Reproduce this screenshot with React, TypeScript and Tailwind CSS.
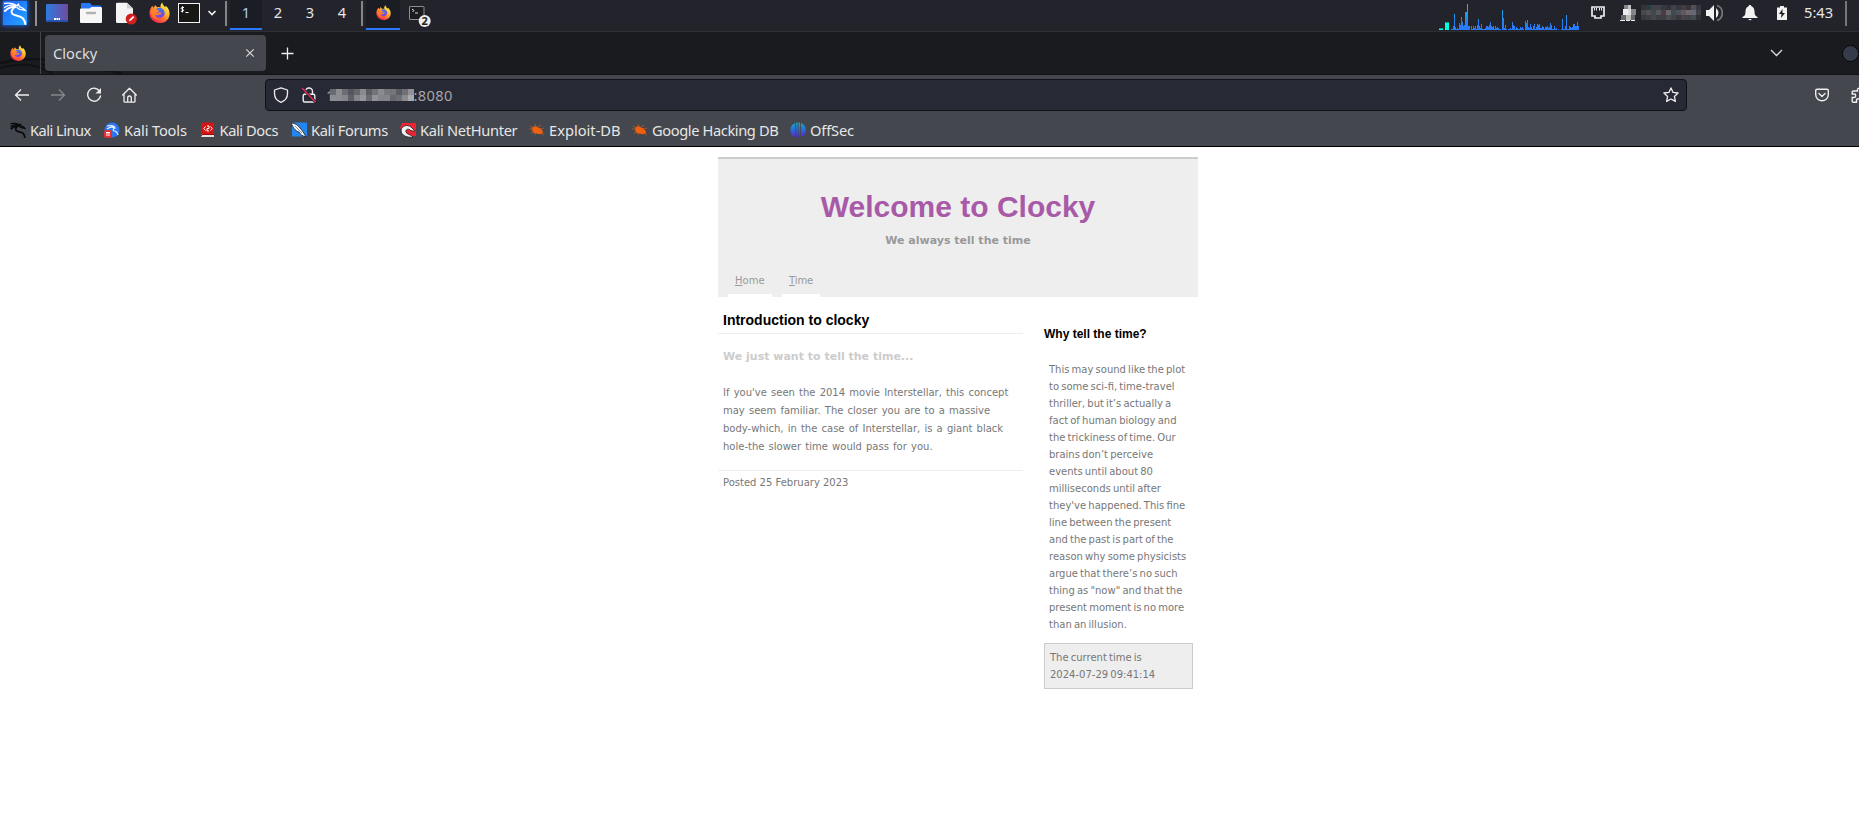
import React from "react";

const heights: [number, number][] = [
  [1451, 1], [1452, 1], [1453, 4], [1454, 16], [1455, 3], [1456, 1], [1457, 2], [1458, 1], [1459, 7], [1460, 5], [1461, 13], [1462, 8], [1463, 4], [1464, 5],
  [1465, 18], [1466, 18], [1467, 26], [1468, 4], [1469, 4], [1471, 4], [1472, 1], [1473, 4], [1474, 2], [1475, 4], [1476, 1], [1477, 5], [1478, 11], [1479, 4],
  [1480, 2], [1481, 6], [1482, 1], [1483, 1], [1484, 1], [1485, 2], [1486, 4], [1487, 4], [1488, 3], [1489, 5], [1490, 8], [1491, 4], [1492, 3], [1493, 4],
  [1494, 1], [1495, 4], [1496, 2], [1497, 3], [1498, 2], [1499, 1], [1500, 1], [1502, 20], [1503, 12], [1504, 2], [1505, 5], [1506, 1], [1508, 1], [1509, 1],
  [1510, 2], [1511, 1], [1512, 8], [1513, 5], [1514, 4], [1515, 1], [1516, 3], [1517, 2], [1518, 1], [1519, 1], [1520, 3], [1521, 2], [1522, 3], [1523, 1],
  [1525, 9], [1526, 7], [1527, 10], [1528, 3], [1529, 2], [1530, 6], [1531, 3], [1532, 1], [1533, 4], [1534, 6], [1535, 1], [1536, 3], [1537, 6], [1538, 5],
  [1539, 6], [1540, 2], [1541, 2], [1542, 4], [1543, 3], [1544, 1], [1545, 3], [1546, 3], [1547, 4], [1548, 2], [1549, 3], [1550, 7], [1551, 5], [1552, 1],
  [1553, 1], [1554, 4], [1555, 1], [1556, 2], [1558, 1], [1561, 1], [1562, 11], [1563, 1], [1564, 1], [1565, 4], [1566, 15], [1567, 1], [1568, 1], [1569, 4],
  [1570, 3], [1571, 2], [1572, 3], [1573, 6], [1574, 6], [1575, 4], [1576, 4], [1577, 8], [1578, 4],
];

function Graph() {
  return (
    <svg width="142" height="30" viewBox="1438 0 142 30" shapeRendering="crispEdges">
      <defs>
        <linearGradient id="load" gradientUnits="userSpaceOnUse" x1="0" y1="0" x2="0" y2="30">
          <stop offset="0" stopColor="#17c9dd" />
          <stop offset="0.75" stopColor="#2680f2" />
          <stop offset="1" stopColor="#2a79ff" />
        </linearGradient>
      </defs>
      <path d="M1439 28h4v2h-4zM1445 22h4v8h-4z" fill="#00ffe0" />
      <path d="M1439 28h4v1h-4zM1445 22h4v1h-4z" fill="#0a9d90" />
      {heights.map(([x, h]) => (
        <rect key={x} x={x} y={30 - h} width="1" height={h} fill="url(#load)" />
      ))}
    </svg>
  );
}

function Dragon({ size, color, weight }: { size: number; color: string; weight: number }) {
  return (
    <svg width={size} height={size} viewBox="0 0 24 24" fill="none" stroke={color} strokeLinecap="round" className="shrink-0">
      <path d="M1.500 2.500C6 1.800 10 2.300 13.500 4.300" strokeWidth={weight} />
      <path d="M1.500 6.500C5 4 10 3.500 14 4.800l1.500-1.600.8 2.500 4.200 1.800 1.800 2-3.800-.8c-2.500.2-3-.4-4.500-2.200" strokeWidth={weight} />
      <path d="M2 10c2.500-3 6-4.500 11-4.300-4 1.800-5.500 4.800-3.500 7.300 3 2.500 7.500.8 10.500 4.500 1.400 1.800 2 3.500 2.300 5.500" strokeWidth={weight + 0.7} />
    </svg>
  );
}

function Firefox({ size, id }: { size: number; id: string }) {
  return (
    <svg width={size} height={size} viewBox="0 0 24 24" className="shrink-0">
      <defs>
        <linearGradient id={id + "a"} x1="0.85" y1="0.1" x2="0.2" y2="0.9">
          <stop offset="0" stopColor="#fff44f" />
          <stop offset="0.35" stopColor="#ffb62c" />
          <stop offset="0.65" stopColor="#ff6a36" />
          <stop offset="1" stopColor="#f5254f" />
        </linearGradient>
        <linearGradient id={id + "b"} x1="0.3" y1="0" x2="0.5" y2="1">
          <stop offset="0" stopColor="#3f7ae8" />
          <stop offset="1" stopColor="#8141e0" />
        </linearGradient>
      </defs>
      <path d="M15.2.5c.2 2.500 1.800 3.700 3 5.200l1.300-1.100c2.700 2.500 4.100 5.500 4 9C23.300 19.800 18.500 24 12.300 24 5.800 24 .5 19.300.5 12.900c0-3.500 1.500-6.700 3.400-8.700L5 6.600l2.300-3.300c.4 1.300 1.300 2 2.300 2.600 1.500-.2 2.700 0 3.700.4-.6-2.200.3-4.300 1.900-5.800z" fill={`url(#${id}a)`} />
      <path d="M8.200 8.300c1.300-1.500 3.600-1.900 5.300-1.400 2.700 1 4.600 3.200 4.500 6-.1 3.100-2.600 5.200-5.700 5.200-3 0-5.100-1.900-5.600-4.300 1.100 1.500 3.200 1.900 5.200.6 1-.7 1.900-.6 2.100-1.100.1-.7-.9-1.300-2-1.300-1.400 0-1.900.8-3.200.8.600-1.400 1.700-2 2.900-2.600-.900-.5-2.200-.9-3.500-1.900z" fill={`url(#${id}b)`} />
      <path d="M1.800 10.500c.4-1.700 1.800-2.700 3.300-3 1.700-.2 3.300.1 4.900 2.100-1.500.4-2.400 1.500-2.500 2.900.9.900 2.500 1.100 3.900.5-.9 1.900-3.300 2.400-4.800 1.500.4 2.900 3 4.900 6 4.800-5.500 2.200-10.700-2.100-10.800-8.800z" fill="#ff8a25" fillOpacity=".75" />
    </svg>
  );
}

function Mosaic({ colors, cols, cell, rows }: { colors: string[]; cols: number; cell: number; rows: number }) {
  return (
    <svg width={cols * cell} height={rows * cell} shapeRendering="crispEdges" className="shrink-0">
      {colors.map((c, i) => (
        <rect key={i} x={(i % cols) * cell} y={Math.floor(i / cols) * cell} width={cell} height={cell} fill={c} />
      ))}
    </svg>
  );
}

function Panel() {
  return (
    <header className="flex h-[31px] shrink-0 items-start bg-[#22232b] text-[14.67px] text-[#e6e6e6]">
      <div className="mt-px ml-[3px] flex h-6 w-6 shrink-0 items-center justify-center bg-linear-to-br from-[#2560ff] to-[#27a4ff] shadow-[0_0_4px_1px_#1d5fd0]">
        <Dragon size={24} color="#fff" weight={1.3} />
      </div>
      <div className="mt-px ml-2 h-[25px] w-[2px] bg-[#909090]" />
      <svg className="mt-1 ml-[9px]" width="22" height="18" viewBox="0 0 22 18">
        <defs><linearGradient id="desk"><stop offset="0" stopColor="#2d7be0" /><stop offset="1" stopColor="#704ba0" /></linearGradient></defs>
        <rect width="22" height="18" rx="1" fill="url(#desk)" />
        <path d="M0 17h22" stroke="#2a50b0" strokeWidth="2" />
        <path d="M8 14h2v2H8zM10.500 14h1.500v2h-1.500zM12.500 14h1.500v2h-1.500z" fill="#fff" />
      </svg>
      <svg className="mt-[3px] ml-3" width="22" height="20" viewBox="0 0 22 20">
        <path d="M1 1q0-1 1-1h8l2 2.500h8q1 0 1 1V9H1z" fill="#2777ff" />
        <path d="M0 6.500q0-1 1-1h8.500L11.500 4H21q1 0 1 1v14q0 1-1 1H1q-1 0-1-1z" fill="#f6f6f6" />
        <path d="M7 10h8" stroke="#b2b2b2" strokeWidth="2.400" strokeLinecap="round" />
      </svg>
      <svg className="mt-[2px] ml-[14px]" width="22" height="23" viewBox="0 0 22 23">
        <path d="M0 2q0-1.300 1.300-1.300H11L17 6.500V21H1.300Q0 21 0 19.700z" fill="#f4f4f4" />
        <path d="M11 .7 17 6.500h-6z" fill="#cfcfcf" />
        <circle cx="15.300" cy="17" r="5.600" fill="#d01f1f" />
        <path d="m13 19.300.7-2 3.400-3.200 1.200 1.100-3.300 3.400z" fill="#fff" />
      </svg>
      <div className="mt-[2px] ml-[11px] flex"><Firefox size={21} id="p" /></div>
      <svg className="mt-[3px] ml-2" width="22" height="20" viewBox="0 0 22 20">
        <rect x=".5" y=".5" width="21" height="19" fill="#171816" stroke="#f2f2f0" />
        <path d="M6 4.500H4.200c-1.500.1-1.300 1.700 0 1.800 1.900.1 1.900 1.900.1 2H2.800M4.500 3.200v6.300M7.500 9.500h3" fill="none" stroke="#fff" strokeWidth="1" />
      </svg>
      <svg className="mt-[9px] ml-[7px]" width="10" height="8" viewBox="0 0 10 8"><path d="m1.500 2 3.500 3.500L8.500 2" fill="none" stroke="#eee" strokeWidth="1.700" /></svg>
      <div className="mt-px ml-[8px] h-[25px] w-[2px] bg-[#858585]" />
      <nav className="ml-[3px] flex h-[30px] leading-[25px]">
        <span className="w-8 border-b-2 border-[#2777ff] bg-[#1b1d25] text-center text-[#a9ccf5]">1</span>
        <span className="w-8 text-center">2</span>
        <span className="w-8 text-center">3</span>
        <span className="w-8 text-center">4</span>
      </nav>
      <div className="mt-px ml-[3px] h-[25px] w-[2px] bg-[#858585]" />
      <div className="ml-[3px] flex h-[30px] w-[34px] justify-center border-b-2 border-[#2777ff] bg-[#1b1d25] pt-[5px]"><Firefox size={15} id="t" /></div>
      <svg className="mt-[5px] ml-[9px]" width="22" height="23" viewBox="0 0 22 23">
        <rect x=".5" y="1.500" width="14.500" height="13" rx=".5" fill="#1b1c1d" stroke="#8d8d8d" />
        <path d="m3 4 2 1.500L3.500 7M6 8h3" stroke="#ddd" fill="none" />
        <circle cx="15.700" cy="16" r="6" fill="#eee" />
        <text x="15.700" y="20" textAnchor="middle" fontSize="11" fontWeight="700" fill="#222">2</text>
      </svg>
      <div className="ml-auto flex">
        <Graph />
        <svg className="mt-[6px] ml-[10px]" width="16" height="14" viewBox="0 0 16 14">
          <path d="M2 1h12v9h-3v2H5v-2H2z" fill="none" stroke="#eee" strokeWidth="1.700" />
          <path d="M4.500 2v2.500M6.500 2v2.500M9.500 2v2.500M11.500 2v2.500" stroke="#eee" />
        </svg>
        <svg className="mt-[5px] ml-[14px]" width="16" height="16" shapeRendering="crispEdges">
          <path d="M4 0h4v4H4z" fill="#858689" /><path d="M8 0h3v4H8z" fill="#c4c4c5" />
          <path d="M3 4h5v6H3z" fill="#eee" /><path d="M8 4h3v6H8z" fill="#ddd" /><path d="M11 4h5v6h-5z" fill="#858587" />
          <path d="M1 10h5v5H1z" fill="#6a6a6d" /><path d="M6 10h5v5H6z" fill="#bbb" /><path d="M11 10h4v5h-4z" fill="#666" />
          <path d="M0 15h5v1H0zM6 15h4v1H6zM11 15h4v1h-4z" fill="#eee" />
        </svg>
        <div className="mt-[5px] ml-[5px]">
          <Mosaic cols={12} rows={3} cell={5} colors={["#333338", "#2c3a42", "#414247", "#414147", "#313b44", "#343238", "#404248", "#303840", "#463b3e", "#35343b", "#514e55", "#343941", "#48484c", "#505155", "#41484d", "#555860", "#513a43", "#66666b", "#404954", "#4c5058", "#625960", "#72686c", "#626a7a", "#414149", "#38393e", "#3b3e43", "#47474b", "#3d3f47", "#3d3d43", "#4b4b50", "#3f4247", "#38383e", "#4b4148", "#3f4348", "#444a52", "#303137"]} />
        </div>
        <svg className="mt-[4px] ml-[5px]" width="18" height="18" viewBox="0 0 18 18">
          <path d="M0 6h3l5-5v16l-5-5H0z" fill="#f2f2f0" />
          <path d="M10 4q5 5 0 10z" fill="#f2f2f0" />
          <path d="M11 1.500c7 2 7 13 0 15" fill="none" stroke="#77787b" strokeWidth="1.700" />
        </svg>
        <svg className="mt-[4px] ml-[18px]" width="16" height="17" viewBox="0 0 16 17">
          <path d="M8 1c-1 0-1.300.7-1.400 1.300C4.500 3 3.700 5 3.500 7c0 4-1 5-3 6v1h15v-1c-2-1-3-2-3-6-.2-2-1-4-3.100-4.700C9.300 1.700 9 1 8 1zM6 15h4l-2 1.500z" fill="#f2f2f0" />
        </svg>
        <svg className="mt-[6px] ml-[19px]" width="10" height="14" viewBox="0 0 10 14">
          <path d="M0 1.500h3V0h4v1.500h3V14H0z" fill="#f2f2f0" /><path d="M5.500 3 2 8h2.500L4 12l4-5H5.500z" fill="#1c1d24" />
        </svg>
        <span className="ml-[17px] w-[30px] leading-[25px]">5:43</span>
        <div className="mt-px mr-[12px] ml-[11px] h-[25px] w-[2px] bg-[#777]" />
      </div>
    </header>
  );
}

function TabStrip() {
  return (
    <div className="relative flex h-11 shrink-0 items-center border-t border-b border-t-[#2e2f33] border-b-[#111215] bg-[#1a1b1f] text-[14.67px] text-[#dedede]">
      <svg className="absolute bottom-0 left-0" width="130" height="16" viewBox="0 0 130 16" fill="none" stroke="#111215">
        <path d="M0 5C20 1 38 0 46 2" strokeWidth="3" />
        <path d="M0 10C20 5 34 5 50 14M41 6q8 2 11 10" strokeWidth="2" />
        <path d="M50 9C80 8 108 11 122 16" strokeWidth="2.500" />
      </svg>
      <div className="relative flex h-full w-[41px] shrink-0 items-center border-r border-[#46474c] pl-[10px]"><Firefox size={16} id="s" /></div>
      <div className="relative ml-1 flex h-9 w-[221px] items-center justify-between rounded-[4px] bg-[#44474e] pr-[11px] pl-2">
        <span>Clocky</span>
        <svg width="10" height="10" viewBox="0 0 10 10"><path d="m1.300 1.300 7.400 7.400m0-7.400L1.300 8.700" stroke="#ddd" strokeWidth="1.100" /></svg>
      </div>
      <svg className="ml-[15px]" width="13" height="13" viewBox="0 0 13 13"><path d="M6.500 .5v12M.5 6.500h12" stroke="#eee" strokeWidth="1.300" /></svg>
      <svg className="ml-auto" width="13" height="8" viewBox="0 0 13 8"><path d="m1 1 5.500 5.500L12 1" fill="none" stroke="#ddd" strokeWidth="1.300" /></svg>
      <div className="ml-[59px] h-[17px] w-[17px] rounded-full border border-[#050608] bg-[#353b49]" />
    </div>
  );
}

const ip = ["#696a71", "#8c8c91", "#6c6d73", "#55565e", "#66676d", "#8a8b90", "#5b5c64", "#73737a", "#8a8a90", "#77777d", "#74757b", "#5a5b63", "#707177", "#919196",
  "#8d8e93", "#8b8b90", "#85868b", "#5f6067", "#85868b", "#96969a", "#6a6a71", "#92929a", "#84848a", "#85858b", "#66676f", "#707178", "#8a8b90", "#aaaaae"];

function AddressBar() {
  return (
    <div className="flex h-10 shrink-0 items-center">
      <svg className="ml-[14px]" width="16" height="14" viewBox="0 0 16 14" fill="none" stroke="#eee" strokeWidth="1.300"><path d="M15 7H1.500M7 1.500 1.500 7 7 12.500" /></svg>
      <svg className="ml-[21px]" width="15" height="14" viewBox="0 0 15 14" fill="none" stroke="#86888d" strokeWidth="1.300"><path d="M0 7h13.500M8 1.500 13.500 7 8 12.500" /></svg>
      <svg className="ml-[20px]" width="16" height="16" viewBox="0 0 16 16"><path d="M13.500 4A6.500 6.500 0 1 0 14.500 9" fill="none" stroke="#eee" strokeWidth="1.400" strokeLinecap="round" /><path d="M15 1v5.500H9.500z" fill="#eee" /></svg>
      <svg className="ml-[20px]" width="15" height="16" viewBox="0 0 15 16" fill="none" stroke="#eee" strokeWidth="1.300" strokeLinejoin="round" strokeLinecap="round"><path d="M.7 8 7.500 1.200 14.300 8M2 7v7.200q0 1 1 1h9q1 0 1-1V7M5.700 15v-4q0-2 1.800-2t1.800 2v4" /></svg>
      <div className="ml-[128px] flex h-8 w-[1422px] items-center rounded-[4px] border border-[#101116] bg-[#272934] text-[14.67px] text-[#a4a4a8]">
        <svg className="ml-[7px]" width="16" height="16" viewBox="0 0 16 16" fill="none" stroke="#eee" strokeWidth="1.300" strokeLinejoin="round"><path d="M8 .8 14.500 3v3.500c0 4.500-3 7.500-6.500 8.900-3.500-1.400-6.500-4.400-6.500-8.900V3z" /></svg>
        <svg className="ml-[12px]" width="16" height="16" viewBox="0 0 16 16" fill="none" stroke="#eee" strokeWidth="1.400"><path d="M4.500 7V4.500a3.500 3.500 0 0 1 7 0V7" /><rect x="2.200" y="7.200" width="11.600" height="7.800" rx="1.500" /><path d="m1 1 13.500 14" stroke="#272934" strokeWidth="3" /><path d="m1 1 13.500 14" stroke="#e22850" strokeWidth="1.400" /></svg>
        <span className="ml-[9px] -mr-[4px]">1</span>
        <div className="relative mt-[-1px] flex"><Mosaic cols={14} rows={2} cell={6} colors={ip} /></div>
        <span className="-ml-[1px] tracking-[0.4px]">:8080</span>
        <svg className="mr-[7px] ml-auto" width="16" height="16" viewBox="0 0 16 16" fill="none" stroke="#eee" strokeWidth="1.300" strokeLinejoin="round"><path d="m8 .9 2.100 4.500 5 .6-3.700 3.400 1 5L8 12l-4.400 2.400 1-5L.9 6l5-.6z" /></svg>
      </div>
      <svg className="ml-auto" width="14" height="14" viewBox="0 0 14 14" fill="none" stroke="#eee" strokeWidth="1.400" strokeLinecap="round" strokeLinejoin="round"><path d="M2 1.200h10q1.300 0 1.300 1.300V6.500a6.300 6.300 0 0 1-12.600 0V2.500Q.7 1.200 2 1.200zM4 5.500l3 3 3-3" /></svg>
      <svg className="ml-[22px]" width="8" height="16" viewBox="0 0 8 16" fill="none" stroke="#eee" strokeWidth="1.400"><path d="M9 1.200Q6 .8 6.500 4H2.500q-1.300 0-1.300 1.300V7h2q1.500 0 1.500 1.700T3.200 10.500h-2v3.700q0 1 1.300 1h3v-2q0-1.500 2-1.500h1" /></svg>
    </div>
  );
}

function Bug() {
  return (
    <svg width="16" height="16" viewBox="0 0 16 16" className="shrink-0"><path d="M3 6.500C4 4 7.500 3.500 9 5.500c3 .5 5 3 5 5.500-1.500 1.500-4.500 1.500-6 .5-3 .5-5-2-5-5z" fill="#f0600f" /><path d="m1 4 3 2M0 7h4m-2 4 3-1m1-5 .5-3M9 5l3-2m-1 4 4-1m-4 5 4 2m-8-2-1 2" stroke="#b65a28" strokeWidth=".8" /></svg>
  );
}

const bookmarks: { label: string; cls: string; icon: React.ReactNode }[] = [
  { label: "Kali Linux", cls: "w-[94px] tracking-[-0.52px]", icon: <Dragon size={16} color="#08090b" weight={1.9} /> },
  {
    label: "Kali Tools", cls: "w-[95.5px] tracking-[-0.15px]",
    icon: <svg width="16" height="16" viewBox="0 0 16 16"><circle cx="8" cy="8" r="7.500" fill="#2b76f0" /><path d="M3 4q5-1 8 1M3 7q4-3 8-1-3 1-1 3 3 0 4 4" fill="none" stroke="#e8f0ff" strokeWidth="1.200" /><rect y="8" width="8" height="8" rx="2.500" fill="#e32e32" /><path d="M2 10.500h4M3 10.500V14m2-3.500V14" stroke="#fff" /></svg>,
  },
  {
    label: "Kali Docs", cls: "w-[91.500px] tracking-[-0.42px]",
    icon: <svg width="16" height="16" viewBox="0 0 16 16"><path d="M1 2 3 .5h11v12H3L1 14z" fill="#d61414" /><path d="M1 14q0-2 2-2h11v3H2q-1 0-1-1z" fill="#e8dede" /><path d="M1 14q0-1.500 2-1.500h11" stroke="#8f0d0d" fill="none" /><path d="M5.500 4.500 3.800 6.500l1.700 2m5-4 1.700 2-1.700 2M7 4h2v2.500H7V9h2" fill="none" stroke="#fff" /></svg>,
  },
  {
    label: "Kali Forums", cls: "w-[109px] tracking-[-0.38px]",
    icon: <svg width="16" height="16" viewBox="0 0 16 16"><rect x="1" y=".5" width="15" height="14" fill="#2386ef" /><path d="M0 1c4 0 7 2 9 5 2 2 4 5 6 9-4-1-6-3-7-5C4 9 2 5 0 1z" fill="#f4f4f4" stroke="#15181f" strokeWidth=".8" /><path d="m4 4 7 7" stroke="#777" strokeWidth=".8" /></svg>,
  },
  {
    label: "Kali NetHunter", cls: "w-[129px] tracking-[-0.33px]",
    icon: <svg width="16" height="16" viewBox="0 0 16 16"><path d="M2 1h14v13H9L0 6z" fill="#ee2433" /><path d="M1 8c1-4 6-6 10-3l4 4c-2 0-4 0-5-1-2-2-5 0-4 2 1 3 5 2 7 5-5 1-12-1-12-7z" fill="#f1f1f1" stroke="#17181c" strokeWidth=".8" /></svg>,
  },
  { label: "Exploit-DB", cls: "w-[103px]", icon: <Bug /> },
  { label: "Google Hacking DB", cls: "w-[158px] tracking-[-0.4px]", icon: <Bug /> },
  {
    label: "OffSec", cls: "w-[70px] tracking-[-0.15px]",
    icon: <svg width="16" height="16" viewBox="0 0 16 16"><defs><linearGradient id="off" x1="0" y1="0" x2="0" y2="1"><stop offset="0" stopColor="#12b0c4" /><stop offset="0.500" stopColor="#2d6ad8" /><stop offset="1" stopColor="#5a20d8" /></linearGradient></defs><path d="M5.200 1v14A7.500 7.500 0 0 1 5.200 1zM6.200.5h1.500v15H6.200zM8.600.5h1.500v15H8.600zM11 1a7.500 7.500 0 0 1 0 14z" fill="url(#off)" /></svg>,
  },
];

const para = "font-['DejaVu_Sans',sans-serif] text-[10px] text-[#777]";

const intro = ["If you've seen the 2014 movie Interstellar, this concept", "may seem familiar. The closer you are to a massive", "body-which, in the case of Interstellar, is a giant black", "hole-the slower time would pass for you."];
const why = ["This may sound like the plot", "to some sci-fi, time-travel", "thriller, but it’s actually a", "fact of human biology and", "the trickiness of time. Our", "brains don’t perceive", "events until about 80", "milliseconds until after", "they've happened. This fine", "line between the present", "and the past is part of the", "reason why some physicists", "argue that there’s no such", "thing as \"now\" and that the", "present moment is no more", "than an illusion."];

function Site() {
  return (
    <main className="ml-[718px] w-[480px] pt-[10px] font-['DejaVu_Sans',sans-serif] whitespace-nowrap">
      <div className="flex h-[140px] flex-col border-t-2 border-[#ccc] bg-[#eee] pt-[30px]">
        <h1 className="text-center font-['Liberation_Sans',sans-serif] text-[30px] leading-9 font-bold text-[#a85aa8]">Welcome to Clocky</h1>
        <p className="mt-2 text-center text-[11px] leading-4 font-bold text-[#999]">We always tell the time</p>
        <nav className="mt-auto ml-[10px] flex gap-[10px] text-[10px] leading-4 text-[#999]">
          <a className="h-6 w-11 border-b-3 border-white pl-[7px]"><u>H</u>ome</a>
          <a className="h-6 w-[38px] border-b-3 border-white pl-[7px] tracking-[-0.1px]"><u>T</u>ime</a>
        </nav>
      </div>
      <div className="flex justify-between">
        <article className="w-[305px] pt-[13px]">
          <h2 className="border-b border-[#eee] pb-[3px] pl-[5px] font-['Liberation_Sans',sans-serif] text-[14px] leading-5 font-bold text-black">Introduction to clocky</h2>
          <h3 className="mt-[15px] pl-[5px] text-[11px] leading-4 font-bold text-[#ccc]">We just want to tell the time...</h3>
          <p className={para + " mt-[19px] pl-[5px] leading-[18px] [word-spacing:1px]"}>
            {intro.map((l) => <span key={l} className="block">{l}</span>)}
          </p>
          <p className={para + " mt-[14px] border-t border-[#eee] pt-1 pl-[5px] leading-4"}>Posted 25 February 2023</p>
        </article>
        <aside className="mr-[5px] w-[149px] pt-[29px]">
          <h3 className="font-['Liberation_Sans',sans-serif] text-[12px] leading-4 font-bold text-black">Why tell the time?</h3>
          <p className={para + " mt-[19px] pl-[5px] leading-[17px] [word-spacing:-1px]"}>
            {why.map((l) => <span key={l} className="block">{l}</span>)}
          </p>
          <div className={para + " mt-[10px] border border-[#ccc] bg-[#eee] p-[5px] leading-[17px] [word-spacing:-1px]"}>
            <span className="block">The current time is</span>
            <span className="block">2024-07-29 09:41:14</span>
          </div>
        </aside>
      </div>
    </main>
  );
}

export default function App() {
  return (
    <div className="flex h-[828px] w-[1859px] flex-col overflow-hidden bg-white font-['Noto_Sans',sans-serif]">
      <Panel />
      <TabStrip />
      <div className="h-[72px] shrink-0 border-b border-black bg-[#44474e]">
        <AddressBar />
        <nav className="flex h-[30px] items-center pl-[10px] text-[14.67px] text-[#e6e6e6]">
          {bookmarks.map((b) => (
            <a key={b.label} className={"flex shrink-0 items-center gap-1 whitespace-nowrap " + b.cls}>{b.icon}<span>{b.label}</span></a>
          ))}
        </nav>
      </div>
      <Site />
    </div>
  );
}
